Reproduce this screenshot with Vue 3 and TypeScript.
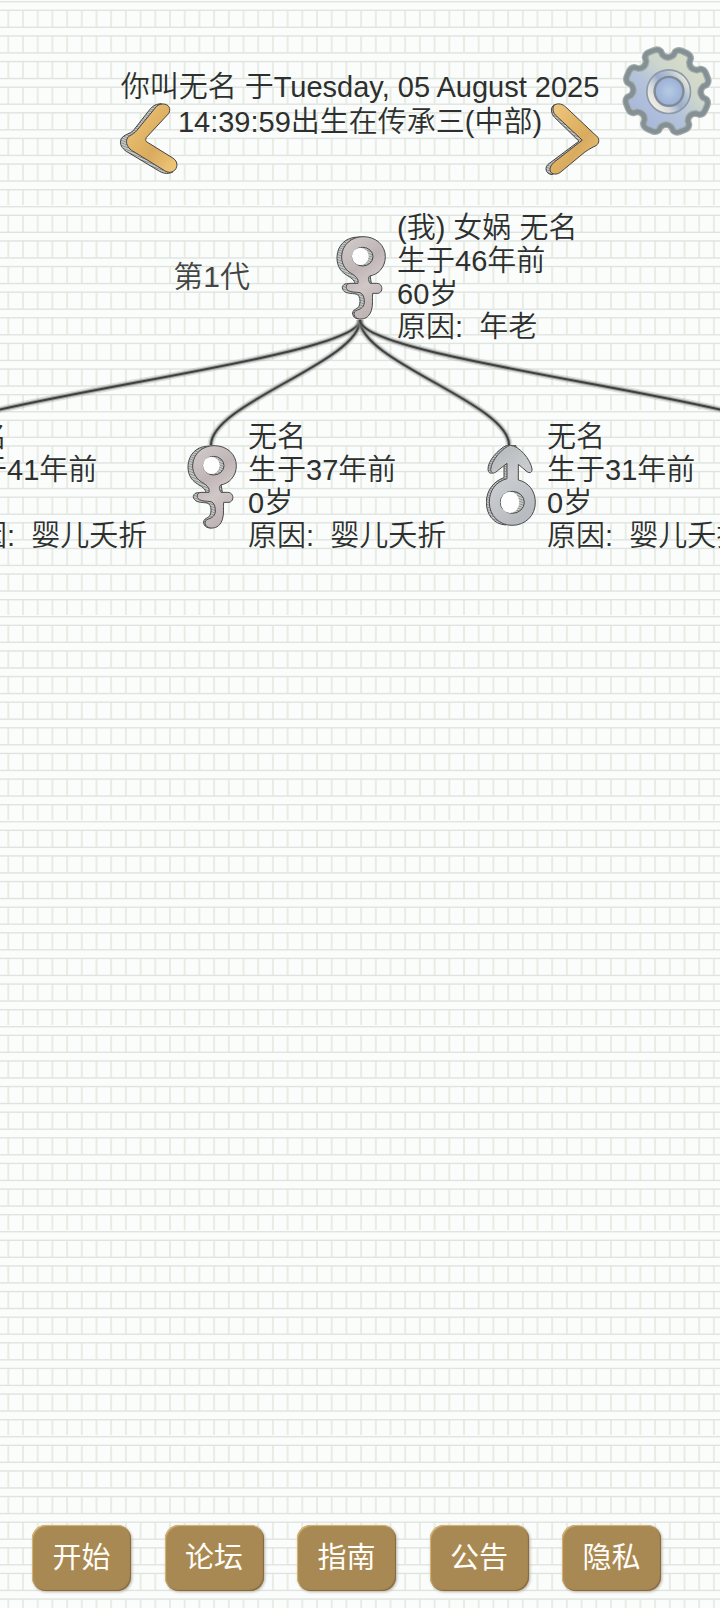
<script setup lang="ts">
import { computed, ref } from 'vue'

type Sex = 'female' | 'male'

interface Person {
  id: number
  sex: Sex
  x: number
  y: number
  lines: string[]
}

const ROOT_BOTTOM = 112
const CHILD_TOP = 237
const NODE_HALF = 24

// Horizontal positions are measured from the centre of the tree.
const people = ref<Person[]>([
  { id: 1, sex: 'female', x: 0, y: 4, lines: ['(我) 女娲 无名', '生于46年前', '60岁', '原因:  年老'] },
  { id: 2, sex: 'female', x: -448, y: 213, lines: ['无名', '生于41年前', '0岁', '原因:  婴儿夭折'] },
  { id: 3, sex: 'female', x: -149, y: 213, lines: ['无名', '生于37年前', '0岁', '原因:  婴儿夭折'] },
  { id: 4, sex: 'male', x: 150, y: 213, lines: ['无名', '生于31年前', '0岁', '原因:  婴儿夭折'] },
])

const branches = computed(() =>
  [-448, -149, 149, 448].map((x) => {
    const bend = (CHILD_TOP - ROOT_BOTTOM) / 3
    return `M0 ${ROOT_BOTTOM}C0 ${ROOT_BOTTOM + bend} ${x} ${CHILD_TOP - bend} ${x} ${CHILD_TOP}`
  }),
)

const nodeStyle = (p: Person) => ({ left: `calc(50% + ${p.x - NODE_HALF}px)`, top: `${p.y}px` })

const gearPath = computed(() => {
  const at = (deg: number, r: number) => {
    const a = (deg * Math.PI) / 180
    return `${(172 + r * Math.cos(a)).toFixed(1)} ${(170 + r * Math.sin(a)).toFixed(1)}`
  }
  let d = ''
  for (let i = 0; i < 8; i++) {
    const c = i * 45 + 24
    d += `${i ? 'L' : 'M'}${at(c - 14, 108)}L${at(c - 12, 120)}Q${at(c - 9, 128)} ${at(c - 4, 127)}`
    d += `L${at(c + 4, 127)}Q${at(c + 9, 128)} ${at(c + 12, 120)}L${at(c + 14, 108)}Q${at(c + 22, 93)} ${at(c + 31, 108)}`
  }
  return d + 'Z'
})

// Ruled paper: ten cells across and eight rows down make one tile.
const columns = Array.from({ length: 10 }, (_, i) => 8.3 + i * 14.7)
const rows = Array.from({ length: 8 }, (_, i) => 10 + i * 25.625)

const menu = ['开始', '论坛', '指南', '公告', '隐私']
</script>

<template>
  <div class="page">
    <svg class="paper" aria-hidden="true">
      <defs>
        <pattern id="paper-grid" width="147" height="205" patternUnits="userSpaceOnUse">
          <g v-for="y in rows" :key="y">
            <rect v-for="x in columns" :key="x" :x="x - 1" :y="y" width="2" height="17" fill="#e9ece5" />
            <rect x="0" :y="y - 0.4" width="147" height="1.4" fill="#e0e4de" />
            <rect x="0" :y="(y + 16.6) % 205" width="147" height="1.4" fill="#e0e4de" />
          </g>
        </pattern>
      </defs>
      <rect width="100%" height="100%" fill="url(#paper-grid)" />
    </svg>

    <svg class="shared" aria-hidden="true">
      <defs>
        <linearGradient id="gold" x1="0" y1="0" x2="1" y2="1">
          <stop offset="0" stop-color="#f0c983" />
          <stop offset="0.45" stop-color="#dfb263" />
          <stop offset="0.6" stop-color="#d8ab60" />
          <stop offset="1" stop-color="#f3ca7a" />
        </linearGradient>
        <linearGradient id="rose" x1="0" y1="0" x2="0.4" y2="1">
          <stop offset="0" stop-color="#d3cdcc" />
          <stop offset="0.45" stop-color="#c0b5b6" />
          <stop offset="0.7" stop-color="#d0c7c7" />
          <stop offset="1" stop-color="#c0b4b5" />
        </linearGradient>
        <linearGradient id="steel" x1="0" y1="0" x2="0.4" y2="1">
          <stop offset="0" stop-color="#b3b6b9" />
          <stop offset="0.5" stop-color="#c9cccf" />
          <stop offset="1" stop-color="#b8bbc0" />
        </linearGradient>
        <pattern id="hatch" width="7" height="7" patternUnits="userSpaceOnUse" patternTransform="rotate(20)">
          <rect width="7" height="7" fill="#c3c7c6" />
          <rect width="7" height="2" fill="#7d8282" />
        </pattern>
        <linearGradient id="gear-fill" x1="0.2" y1="0.9" x2="0.85" y2="0.2">
          <stop offset="0" stop-color="#a8b7dc" />
          <stop offset="0.4" stop-color="#b3c3da" />
          <stop offset="0.7" stop-color="#cdd6cc" />
          <stop offset="1" stop-color="#d8dcc9" />
        </linearGradient>
        <linearGradient id="gear-ring" x1="0.1" y1="0.8" x2="0.9" y2="0.2">
          <stop offset="0" stop-color="#f2efe5" />
          <stop offset="0.25" stop-color="#d9dcdc" />
          <stop offset="0.5" stop-color="#9badcd" />
          <stop offset="0.75" stop-color="#b3c1d3" />
          <stop offset="1" stop-color="#e9eadd" />
        </linearGradient>
        <radialGradient id="gear-hub">
          <stop offset="0" stop-color="#b5cbe2" />
          <stop offset="1" stop-color="#9bafd6" />
        </radialGradient>

        <symbol id="icon-female" viewBox="20 44 150 252">
          <g stroke="#4b4b4b" stroke-width="3" stroke-linejoin="round">
            <path
              fill="url(#hatch)"
              d="M76 188C78 176 62 168 50 160C30 148 22 128 23 106C25 72 48 47 88 47H104L126 186L126 216L108 240L96 292C70 298 62 270 78 264C88 260 92 252 92 240C92 228 88 220 80 218C66 216 52 216 46 211C34 202 38 188 52 187Z"
            />
            <path
              fill="url(#rose)"
              d="M86 186C90 172 76 162 62 154C44 142 36 122 37 104C39 70 66 46 102 46C140 46 168 72 168 106C168 138 146 160 121 164C115 170 117 178 122 186H142C162 186 162 214 146 216L130 216C128 232 132 250 126 268C118 290 104 294 90 293C70 290 70 270 84 266C98 262 105 254 105 242C105 228 102 218 92 214C78 212 66 213 57 208C46 200 50 187 62 186Z"
            />
            <ellipse cx="100" cy="106" rx="31" ry="28" fill="url(#hatch)" />
          </g>
          <ellipse cx="93" cy="105" rx="25" ry="26" fill="#fdfefd" />
        </symbol>

        <symbol id="icon-male" viewBox="380 402 150 252">
          <g stroke="#4b4b4b" stroke-width="3" stroke-linejoin="round">
            <path
              fill="url(#hatch)"
              d="M440 404C418 414 384 450 386 476C388 492 402 488 412 476L434 458V500C404 510 381 538 381 574C381 610 402 640 440 642L470 600L470 404Z"
            />
            <path
              fill="url(#steel)"
              d="M453 403C432 408 396 446 394 476C396 492 408 486 416 478L443 457V503C408 512 390 540 390 574C390 614 420 643 458 643C498 643 528 614 528 574C528 540 508 514 477 507V460C486 466 494 476 503 482C512 488 519 484 518 474C514 446 480 404 453 403Z"
            />
            <ellipse cx="459" cy="574" rx="36" ry="33" fill="url(#hatch)" />
          </g>
          <ellipse cx="452" cy="574" rx="28" ry="32" fill="#fdfefd" />
        </symbol>
      </defs>
    </svg>

    <header class="header">
      <div class="banner">
        <h1 class="title">你叫无名 于Tuesday, 05 August 2025<br />14:39:59出生在传承三(中部)</h1>
        <button class="arrow prev" type="button" aria-label="上一个">
          <svg viewBox="58 155 180 220" aria-hidden="true">
            <g stroke="#45423d" stroke-width="3" stroke-linejoin="round">
              <path
                fill="url(#hatch)"
                d="M184 160C164 162 156 170 150 178L100 242C90 252 72 252 64 266C58 282 66 294 80 304L180 364C194 372 208 372 220 366L190 330L110 270L196 166Z"
              />
              <path
                fill="url(#gold)"
                d="M188 161C210 160 215 178 207 190L140 262C136 270 138 274 146 278L220 324C240 336 234 364 212 367C204 367 200 365 195 362L96 301C80 290 74 270 88 258C98 252 106 248 112 240L165 175C172 165 178 162 188 161Z"
              />
            </g>
          </svg>
        </button>
        <button class="arrow next" type="button" aria-label="下一个">
          <svg viewBox="422 210 180 220" aria-hidden="true">
            <g stroke="#45423d" stroke-width="3" stroke-linejoin="round">
              <path
                fill="url(#hatch)"
                d="M462 218C448 226 452 246 462 256L536 328L448 394C430 404 434 428 456 429L500 390L560 320Z"
              />
              <path
                fill="url(#gold)"
                d="M462 219C474 212 488 217 496 225L584 308C600 318 598 334 588 341C570 350 556 358 545 368L480 422C466 432 446 428 449 409C452 400 458 394 464 389L546 325L470 254C456 243 455 228 462 219Z"
              />
            </g>
          </svg>
        </button>
      </div>
      <button class="gear" type="button" aria-label="设置">
        <svg viewBox="38 36 268 268" aria-hidden="true">
          <path :d="gearPath" fill="url(#gear-fill)" stroke="#a3adad" stroke-width="20" stroke-linejoin="round" />
          <path :d="gearPath" fill="none" stroke="#849094" stroke-width="13" stroke-linejoin="round" />
          <circle cx="177" cy="172" r="65" fill="url(#gear-ring)" stroke="#8e9aa6" stroke-width="5" />
          <circle cx="178" cy="171" r="43" fill="url(#gear-hub)" stroke="#7f8b95" stroke-width="7" />
        </svg>
      </button>
    </header>

    <main class="tree">
      <p class="generation">第1代</p>
      <svg class="branches" aria-hidden="true">
        <g v-for="d in branches" :key="d" fill="none">
          <path :d="d" stroke="#8a8d8a" stroke-opacity="0.25" stroke-width="7" />
          <path :d="d" stroke="#777a77" stroke-opacity="0.6" stroke-width="4" />
          <path :d="d" stroke="#3e413f" stroke-width="2" />
        </g>
      </svg>
      <article v-for="p in people" :key="p.id" class="person" :style="nodeStyle(p)">
        <svg class="sex" aria-hidden="true"><use :href="`#icon-${p.sex}`" /></svg>
        <div class="facts">
          <p v-for="line in p.lines" :key="line">{{ line }}</p>
        </div>
      </article>
    </main>

    <nav class="menu">
      <button v-for="item in menu" :key="item" class="menu-item" type="button">{{ item }}</button>
    </nav>
  </div>
</template>

<style>
body {
  margin: 0;
  background: #fafdfb;
}
</style>

<style scoped>
.page {
  position: relative;
  display: flex;
  flex-direction: column;
  box-sizing: border-box;
  min-height: 100vh;
  overflow: hidden;
  color: #2d302e;
  font-family: 'Liberation Sans', 'Noto Sans CJK SC', sans-serif;
  font-weight: 350;
}

.paper {
  position: absolute;
  inset: 0;
  width: 100%;
  height: 100%;
}

.shared {
  position: absolute;
  width: 0;
  height: 0;
}

button {
  padding: 0;
  border: 0;
  background: none;
  font: inherit;
  cursor: pointer;
}

svg {
  display: block;
}

.header {
  position: relative;
  display: grid;
  grid-template-columns: 1fr auto 1fr;
  padding: 46px 8px 32px;
}

.banner {
  position: relative;
  grid-column: 2;
  padding-top: 24px;
}

.title {
  margin: 0;
  font-size: 29px;
  font-weight: 350;
  line-height: 35px;
  text-align: center;
  white-space: nowrap;
}

.arrow {
  position: absolute;
  top: 56px;
  width: 60px;
  height: 73px;
}

.arrow svg,
.gear svg {
  width: 100%;
  height: 100%;
}

.prev {
  left: -2px;
}

.next {
  right: -2px;
}

.gear {
  justify-self: end;
  width: 90px;
  height: 90px;
}

.tree {
  position: relative;
  flex: 1;
  min-height: 360px;
  margin-top: 36px;
}

.generation {
  position: absolute;
  top: 49px;
  right: calc(50% + 110px);
  margin: 0;
  color: #424543;
  font-size: 30px;
  line-height: 40px;
}

.branches {
  position: absolute;
  top: 0;
  left: 50%;
  width: 1px;
  height: 1px;
  overflow: visible;
}

.person {
  position: absolute;
  display: flex;
  align-items: center;
  gap: 11px;
}

.sex {
  flex: none;
  width: 50px;
  height: 84px;
}

.facts {
  font-size: 29px;
  line-height: 33px;
  white-space: pre;
}

.facts p {
  margin: 0;
}

.menu {
  position: relative;
  display: flex;
  justify-content: space-between;
  padding: 0 59px 17px 32px;
}

.menu-item {
  width: 99px;
  height: 66px;
  border-radius: 14px;
  background: #a98953;
  box-shadow:
    inset 1px 1px 1px #d9b771,
    inset -1px -1px 1px #86693d,
    1px 1px 3px #b5afa6;
  color: #fffdf8;
  font-size: 29px;
  font-weight: 400;
  line-height: 40px;
}
</style>
